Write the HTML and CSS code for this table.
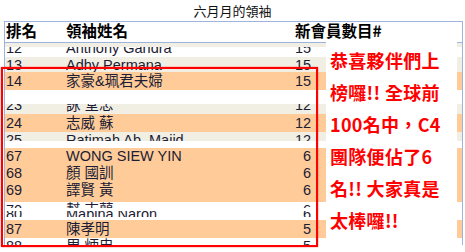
FILE: index.html
```html
<!DOCTYPE html>
<html lang="zh-Hant">
<head>
<meta charset="utf-8">
<title>六月月的領袖</title>
<link rel="stylesheet" href="styles.css">
</head>
<body>
<div class="page">
  <div class="title">六月月的領袖</div>
  <div class="board">
    <div class="head">
      <div class="c-rank">排名</div>
      <div class="c-name">領袖姓名</div>
      <div class="c-count">新會員數目#</div>
    </div>

    <div class="band beige h4"></div>
    <div class="row white h10 clip-bottom"><div class="line"><span class="rank">12</span><span class="name">Anthony Gandra</span><span class="num">15</span></div></div>
    <div class="row beige h15"><div class="line"><span class="rank">13</span><span class="name">Adhy Permana</span><span class="num">15</span></div></div>
    <div class="row orange h18"><div class="line"><span class="rank">14</span><span class="name">家豪&amp;珮君夫婦</span><span class="num">15</span></div></div>
    <div class="band white h14"></div>
    <div class="row beige h10 clip-bottom"><div class="line"><span class="rank">23</span><span class="name">詠 堂忠</span><span class="num">12</span></div></div>
    <div class="row orange h18"><div class="line"><span class="rank">24</span><span class="name">志威 蘇</span><span class="num">12</span></div></div>
    <div class="row beige h9 clip-top"><div class="line"><span class="rank">25</span><span class="name">Ratimah Ab. Majid</span><span class="num">12</span></div></div>
    <div class="band white h7"></div>
    <div class="row orange h17"><div class="line"><span class="rank">67</span><span class="name">WONG SIEW YIN</span><span class="num">6</span></div></div>
    <div class="row orange h17"><div class="line"><span class="rank">68</span><span class="name">顏 國訓</span><span class="num">6</span></div></div>
    <div class="row orange h17"><div class="line"><span class="rank">69</span><span class="name">譯賢 黃</span><span class="num">6</span></div></div>
    <div class="band orange h3"></div>
    <div class="row white h6 clip-top"><div class="line"><span class="rank">70</span><span class="name">幫 吉蘭</span><span class="num">6</span></div></div>
    <div class="band white h3"></div>
    <div class="row white h6 clip-center"><div class="line"><span class="rank">80</span><span class="name">Mabina Naron</span><span class="num">6</span></div></div>
    <div class="band white h3"></div>
    <div class="row orange h18"><div class="line"><span class="rank">87</span><span class="name">陳孝明</span><span class="num">5</span></div></div>
    <div class="row white h7 clip-top"><div class="line"><span class="rank">88</span><span class="name">周 炳忠</span><span class="num">5</span></div></div>
  </div>

  <div class="highlight"></div>

  <div class="callout">
    <div>恭喜夥伴們上</div>
    <div>榜囉!! 全球前</div>
    <div>100名中，C4</div>
    <div>團隊便佔了6</div>
    <div>名!! 大家真是</div>
    <div>太棒囉!!</div>
  </div>
</div>
</body>
</html>
```
FILE: styles.css
```css
* { box-sizing: border-box; }

html, body {
  margin: 0;
  padding: 0;
  background: #ffffff;
}

body {
  font-family: "Liberation Sans", "Noto Sans CJK TC", sans-serif;
  color: #1c1c34;
}

.page {
  position: relative;
  width: 465px;
  height: 252px;
  overflow: hidden;
}

.title {
  height: 21px;
  padding-top: 3px;
  font-family: "Noto Sans CJK TC", sans-serif;
  font-size: 13px;
  line-height: 16px;
  text-align: center;
  color: #111;
}

.board {
  margin-left: 4px;
  width: 459px;
  border-left: 1px solid #9fb4dc;
  border-right: 1px solid #9fb4dc;
}

.head {
  display: grid;
  grid-template-columns: 61px 229px 1fr;
  height: 22px;
  border-top: 1px solid #9fb4dc;
  border-bottom: 1px solid #9fb4dc;
  font-family: "Noto Sans CJK TC", sans-serif;
  font-weight: 700;
  font-size: 15.5px;
  line-height: 16px;
  padding-bottom: 4px;
  color: #000;
}

.head .c-rank { padding-left: 1px; }

.band, .row { width: 100%; }
.row { overflow: hidden; }

.beige { background: #f1efe4; }
.orange { background: #ffcc99; }
.white { background: #ffffff; }

.h3 { height: 3px; }
.h4 { height: 4px; }
.h6 { height: 6px; }
.h7 { height: 7px; }
.h9 { height: 9px; }
.h10 { height: 10px; }
.h14 { height: 14px; }
.h15 { height: 15px; }
.h17 { height: 17px; }
.h18 { height: 18px; }

.line {
  display: grid;
  grid-template-columns: 61px 229px 16px;
  align-items: center;
  height: 100%;
  font-size: 14.5px;
  line-height: 17px;
  white-space: nowrap;
}

.clip-bottom .line,
.clip-top .line,
.clip-center .line {
  height: 17px;
}

.clip-bottom .line { margin-top: -7px; }
.clip-center .line { margin-top: -5px; }

.rank { padding-left: 1px; }
.num { text-align: right; }

.highlight {
  position: absolute;
  left: 1px;
  top: 67px;
  width: 317px;
  height: 180px;
  border: 2px solid #ff0000;
  box-shadow: 0 0 1.5px rgba(255, 0, 0, 0.6);
}

.callout {
  position: absolute;
  left: 326px;
  top: 42px;
  width: 131px;
  height: 196px;
  background: #ffffff;
  padding: 2px 0 0 4px;
  font-family: "Noto Sans CJK TC", sans-serif;
  font-weight: 700;
  font-size: 18px;
  line-height: 32px;
  letter-spacing: 0.3px;
  color: #ff0000;
  white-space: nowrap;
}
```
